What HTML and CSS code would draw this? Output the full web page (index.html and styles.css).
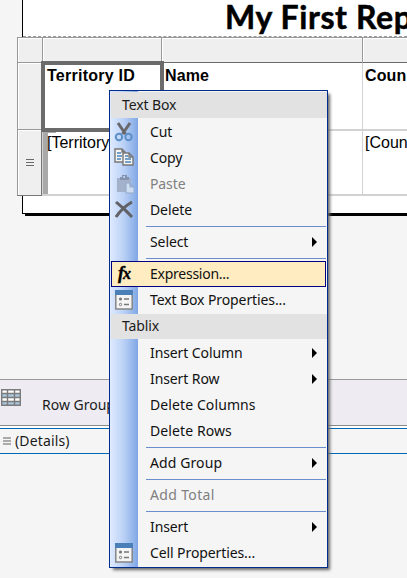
FILE: index.html
```html
<!DOCTYPE html>
<html lang="en">
<head>
<meta charset="utf-8">
<title>Report Designer</title>
<link rel="stylesheet" href="styles.css">
</head>
<body>
<main class="designer">
  <section class="report">
    <div class="page"></div>
    <h1 class="title">My First Rep</h1>
    <div class="tablix">
      <div class="handle corner"></div><div class="handle col"></div><div class="handle col"></div><div class="handle col"></div>
      <div class="handle row"></div><div class="cell head selected">Territory ID</div><div class="cell head name">Name</div><div class="cell head">Coun</div>
      <div class="handle row last"><svg width="9" height="8"><path d="M0 .5h8M0 3.5h8M0 6.5h8" stroke="#6a6a6a"/></svg></div><div class="cell data grouped"><span>[Territory</span></div><div class="cell data"></div><div class="cell data">[Coun</div>
    </div>
  </section>
  <section class="groups">
    <div class="groups-head">
      <svg width="20" height="17" viewBox="0 0 20 17"><path fill="#fff" d="M0 0h20v17H0z"/><path fill="#aac6dc" d="M1 5h18v3H1zM1 12h18v4H1z"/><path fill="none" stroke="#7b7b7b" stroke-width="1.4" d="M.7.7h18.6v15.6H.7zM1 4.5h18M1 8.5h18M1 12.5h18M6.5 1v15M13.5 1v15"/></svg>
      <span>Row Group</span>
    </div>
    <div class="groups-row"><svg width="8" height="8"><path d="M0 1h8M0 4h8M0 7h8" stroke="#929292" stroke-width="1.4"/></svg><span>(Details)</span></div>
  </section>
</main>

<nav class="menu">
  <div class="caption first"><span>Text Box</span></div>
  <div class="item"><i><svg width="20" height="20" viewBox="0 0 20 20"><path d="M4 1l7.5 11M16 1L8.5 12" stroke="#68686c" stroke-width="3" fill="none"/><circle cx="5" cy="15" r="3.2" fill="none" stroke="#5b8fc8" stroke-width="2"/><circle cx="14.5" cy="15" r="3.2" fill="none" stroke="#5b8fc8" stroke-width="2"/></svg></i><span>Cut</span></div>
  <div class="item"><i><svg width="20" height="20" viewBox="0 0 20 20"><path d="M1 1h7l3 3v10H1zM8 1v3h3" fill="#f5f5f5" stroke="#777" stroke-width="1.4"/><path d="M3 5h4M3 8h5M3 11h4" stroke="#4c82b9" stroke-width="1.3"/><path d="M9 5h6l4 4v8H9zM15 5v4h4" fill="#f5f5f5" stroke="#777" stroke-width="1.4"/><path d="M11 8h3M11 11h6M11 14h6" stroke="#4c82b9" stroke-width="1.3"/></svg></i><span>Copy</span></div>
  <div class="item disabled"><i><svg width="20" height="20" viewBox="0 0 20 20"><path d="M3 4h14v14H3z" fill="#a3b2ca"/><path d="M6 6V3h2V1h5v2h2v3z" fill="#8492ad"/><path d="M9 2h2v2H9z" fill="#b4c8e8"/><path d="M12 9h4l4 4v6h-8zM16 9v4h4" fill="#cedcf1" stroke="#93a8c8"/></svg></i><span>Paste</span></div>
  <div class="item"><i><svg width="20" height="20" viewBox="0 0 20 20"><path d="M1 3l2-2c5 4 11 9 16 15l-2 2C11 12 6 7 1 3z" fill="#626266"/><path d="M18 2C11 6 6 11 2 17" fill="none" stroke="#626266" stroke-width="3"/></svg></i><span>Delete</span></div>
  <hr>
  <div class="item more"><span>Select</span></div>
  <hr>
  <div class="item active"><i class="fx"><em>f</em><b>x</b></i><span class="expr">Expression...</span></div>
  <div class="item"><i><svg class="props" width="18" height="20" viewBox="0 0 18 20"><path fill="#f5f5f5" stroke="#858585" stroke-width="1.5" d="M.8 1h16.4v18H.8z"/><path fill="#4a7fb8" d="M0 0h18v5H0z"/><circle cx="5.5" cy="9" r="1.6" fill="#777"/><circle cx="5.5" cy="14.5" r="1.2" fill="none" stroke="#777"/><path stroke="#777" stroke-width="1.3" d="M9 9h5M9 14.5h5"/></svg></i><span>Text Box Properties...</span></div>
  <div class="caption"><span>Tablix</span></div>
  <div class="item more"><span>Insert Column</span></div>
  <div class="item more"><span>Insert Row</span></div>
  <div class="item"><span class="wide">Delete Columns</span></div>
  <div class="item"><span class="wide">Delete Rows</span></div>
  <hr>
  <div class="item more"><span class="wide">Add Group</span></div>
  <hr>
  <div class="item disabled"><span class="wide">Add Total</span></div>
  <hr>
  <div class="item more"><span>Insert</span></div>
  <div class="item"><i><svg class="props" width="18" height="20" viewBox="0 0 18 20"><path fill="#f5f5f5" stroke="#858585" stroke-width="1.5" d="M.8 1h16.4v18H.8z"/><path fill="#4a7fb8" d="M0 0h18v5H0z"/><circle cx="5.5" cy="9" r="1.6" fill="#777"/><circle cx="5.5" cy="14.5" r="1.2" fill="none" stroke="#777"/><path stroke="#777" stroke-width="1.3" d="M9 9h5M9 14.5h5"/></svg></i><span>Cell Properties...</span></div>
</nav>
</body>
</html>
```

FILE: styles.css
```css
* { box-sizing: border-box; }
html, body { margin: 0; height: 578px; overflow: hidden; }
body { position: relative; background: #f5f5f5; color: #1b1b1b; font: 14px/20px "Noto Sans", "Open Sans", sans-serif; }
svg { display: block; flex: none; }

.designer { width: 407px; height: 578px; overflow: hidden; }
.report { position: relative; height: 379px; }
.page { position: absolute; left: 22px; top: 0; width: 400px; height: 213px; background: #fff; border-left: 1px solid #000; box-shadow: 3px 3px 0 #000; }
.page::after { content: ""; position: absolute; left: -1px; right: 0; bottom: -1px; border-bottom: 1px solid #000; }
.title { position: relative; margin: 0; padding-left: 225px; height: 37px; font: bold 32px/34px Lato, sans-serif; letter-spacing: .6px; -webkit-text-stroke: .5px #000; color: #000; white-space: nowrap; }
.title::after { content: ""; position: absolute; left: 23px; top: 36px; width: 384px; border-top: 1px dashed #999; }

.tablix { position: relative; display: grid; grid-template-columns: 25px 119px 201px 60px; grid-template-rows: 25px 67px 67px; margin-left: 17px; width: 405px; color: #000; font: 16px/20px "Liberation Sans", sans-serif; }
.handle { background: #efefef; border-top: 1px solid #999; border-left: 1px solid #999; box-shadow: inset 1px 1px #fff; }
.handle.row { border-right: 1px solid #777; }
.handle.last { display: flex; align-items: center; justify-content: center; border-bottom: 1px solid #777; padding-left: 1px; }
.cell { background: #fff; border-left: 1px solid #d2d2d2; padding: 3px 0 0 2px; white-space: nowrap; overflow: hidden; }
.cell.head { font-weight: bold; font-size: 16px; border-top: 1px solid #6b6b6b; letter-spacing: .1px; }
.cell.name { padding-left: 3px; }
.cell.data { border-top: 2px solid #d2d2d2; border-bottom: 2px solid #d2d2d2; padding-top: 2px; }
.cell.selected { position: relative; z-index: 1; margin: -1px -3px -3px -1px; border: 4px solid #6b6b6b; padding: 1px 0 0 2px; letter-spacing: .25px; }
.cell.grouped { position: relative; padding-left: 4px; }
.grouped::before { content: ""; position: absolute; left: 0; top: -2px; width: 8px; height: 67px; border: 4px solid #a9a9a9; border-left-width: 5px; border-right: 0; }
.grouped span { position: relative; }

.groups-head { display: flex; align-items: flex-start; height: 47px; background: #eeecf2; border-top: 1px solid #999; border-bottom: 1px solid #888; padding-top: 9px; }
.groups-head svg { margin-left: 1px; }
.groups-head span { margin: 6px 0 0 21px; }
.groups-row { display: flex; align-items: center; height: 26px; margin-top: 2px; padding-left: 3px; border-top: 1px solid #0067b5; border-bottom: 1px solid #0067b5; box-shadow: 0 -2px #fff; }
.groups-row span { margin-left: 4px; letter-spacing: .15px; }

.menu { position: absolute; z-index: 5; left: 109px; top: 90px; width: 219px; height: 478px; padding-top: 1px; border: 1px solid #002d8a; background: linear-gradient(90deg, #dfebff, #b9d0f5 50%, #7fa7e5) 0 0 / 28px 100% no-repeat #f5f5f5; box-shadow: 3px 3px 3px -1px #666; white-space: nowrap; letter-spacing: -.1px; }
.caption { height: 25px; margin: 1px 0 1px 1px; padding: 2px 0 0 11px; background: #e2e2e2; }
.caption.first { height: 26px; margin-top: 0; padding-top: 3px; }
.item { display: flex; align-items: center; height: 26px; margin: 0 1px; padding-left: 39px; position: relative; color: #111; }
.item > i { width: 20px; margin: 0 16px 0 -36px; }
.wide { letter-spacing: .1px; }
.props { margin-left: 1px; }
.disabled { color: #808080; }
.disabled .wide { letter-spacing: .35px; }
.active { background: #ffedc1; border: 1px solid #000080; padding-left: 38px; }
.active .expr { letter-spacing: -.25px; }
.fx { display: flex; align-items: center; height: 24px; color: #000; font: italic bold 18px/20px "Liberation Serif", serif; }
.fx em { margin: -3px 0 0 4px; -webkit-text-stroke: .4px #000; }
.fx b { font-size: 16px; line-height: 18px; margin-left: -1px; -webkit-text-stroke: .4px #000; }
.more::after { content: ""; margin-left: auto; margin-right: 9px; border: 5px solid transparent; border-left-color: #000; border-right: 0; }
.menu hr { height: 6px; margin: 0 1px 0 36px; border: 0; background: linear-gradient(#6a8dcc, #6a8dcc) 0 3px / 100% 1px no-repeat; }
```
